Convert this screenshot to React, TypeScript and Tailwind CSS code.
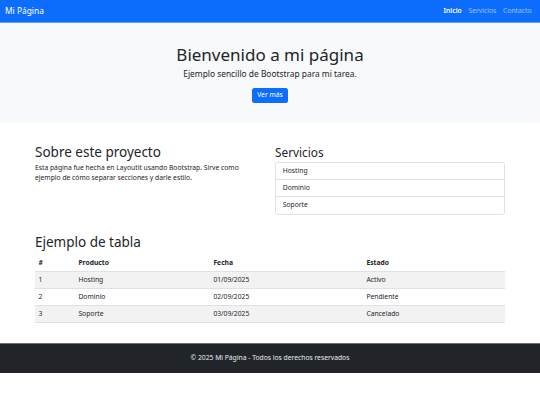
import React from "react";

const font = { fontFamily: '"Noto Sans", "Open Sans", sans-serif' };

export default function App() {
  const rows = [
    ["1", "Hosting", "01/09/2025", "Activo"],
    ["2", "Dominio", "02/09/2025", "Pendiente"],
    ["3", "Soporte", "03/09/2025", "Cancelado"],
  ];
  return (
    <div style={font} className="w-[540px] h-[405px] bg-white text-[#212529] overflow-hidden">
      {/* Navbar */}
      <nav className="h-[23px] bg-[#0d6efd] flex items-center justify-between pl-[5px] pr-[5px] border-b border-[#5c9dfd]">
        <span className="text-[8.4px] text-white leading-none">Mi Página</span>
        <div className="flex text-[6.75px] leading-none">
          <span className="px-[3.4px] text-white font-semibold">Inicio</span>
          <span className="px-[3.4px] text-white/55">Servicios</span>
          <span className="px-[3.4px] text-white/55">Contacto</span>
        </div>
      </nav>

      {/* Hero */}
      <section className="h-[100px] bg-[#f8f9fa] flex flex-col items-center pt-[21.5px]">
        <h1 className="text-[17px] leading-[20px] font-normal">Bienvenido a mi página</h1>
        <p className="text-[8.4px] leading-[12px] mt-[3.5px]">Ejemplo sencillo de Bootstrap para mi tarea.</p>
        <button className="mt-[8px] h-[15px] w-[36px] rounded-[2.5px] bg-[#0d6efd] text-white text-[6.75px] leading-none">
          Ver más
        </button>
      </section>

      {/* About + services */}
      <section className="px-[35px] pt-[21px] flex gap-[10px]">
        <div className="w-[230px]">
          <h2 className="text-[13.5px] leading-[16px] font-normal">Sobre este proyecto</h2>
          <p className="text-[6.75px] leading-[10px] mt-[3px]">
            Esta página fue hecha en Layoutit usando Bootstrap. Sirve como ejemplo de cómo separar secciones y darle estilo.
          </p>
        </div>
        <div className="flex-1">
          <h3 className="text-[11.8px] leading-[14px] font-normal pt-[1px]">Servicios</h3>
          <ul className="mt-[3px] border border-[#dee2e6] rounded-[2.5px] text-[6.75px]">
            <li className="h-[17px] flex items-center px-[6.75px] border-b border-[#dee2e6]">Hosting</li>
            <li className="h-[17px] flex items-center px-[6.75px] border-b border-[#dee2e6]">Dominio</li>
            <li className="h-[17px] flex items-center px-[6.75px]">Soporte</li>
          </ul>
        </div>
      </section>

      {/* Table */}
      <section className="px-[35px] pt-[19px]">
        <h2 className="text-[13.5px] leading-[16px] font-normal">Ejemplo de tabla</h2>
        <table className="w-full mt-[4.5px] text-[6.75px] border-collapse">
          <thead>
            <tr className="h-[17px] border-b border-[#dee2e6] text-left">
              <th className="w-[40px] px-[3.4px] font-bold">#</th>
              <th className="w-[135px] px-[3.4px] font-bold">Producto</th>
              <th className="w-[153px] px-[3.4px] font-bold">Fecha</th>
              <th className="px-[3.4px] font-bold">Estado</th>
            </tr>
          </thead>
          <tbody>
            {rows.map((r, i) => (
              <tr key={i} className={`h-[17px] border-b border-[#dee2e6] ${i % 2 === 0 ? "bg-[#f2f2f2]" : "bg-white"}`}>
                {r.map((c, j) => (
                  <td key={j} className="px-[3.4px]">{c}</td>
                ))}
              </tr>
            ))}
          </tbody>
        </table>
      </section>

      {/* Footer */}
      <footer className="mt-[19.5px] h-[30.5px] bg-[#212529] flex items-center justify-center border-t border-[#6c6f72]">
        <p className="text-[6.75px] text-[#e9ecef]">© 2025 Mi Página - Todos los derechos reservados</p>
      </footer>
    </div>
  );
}
